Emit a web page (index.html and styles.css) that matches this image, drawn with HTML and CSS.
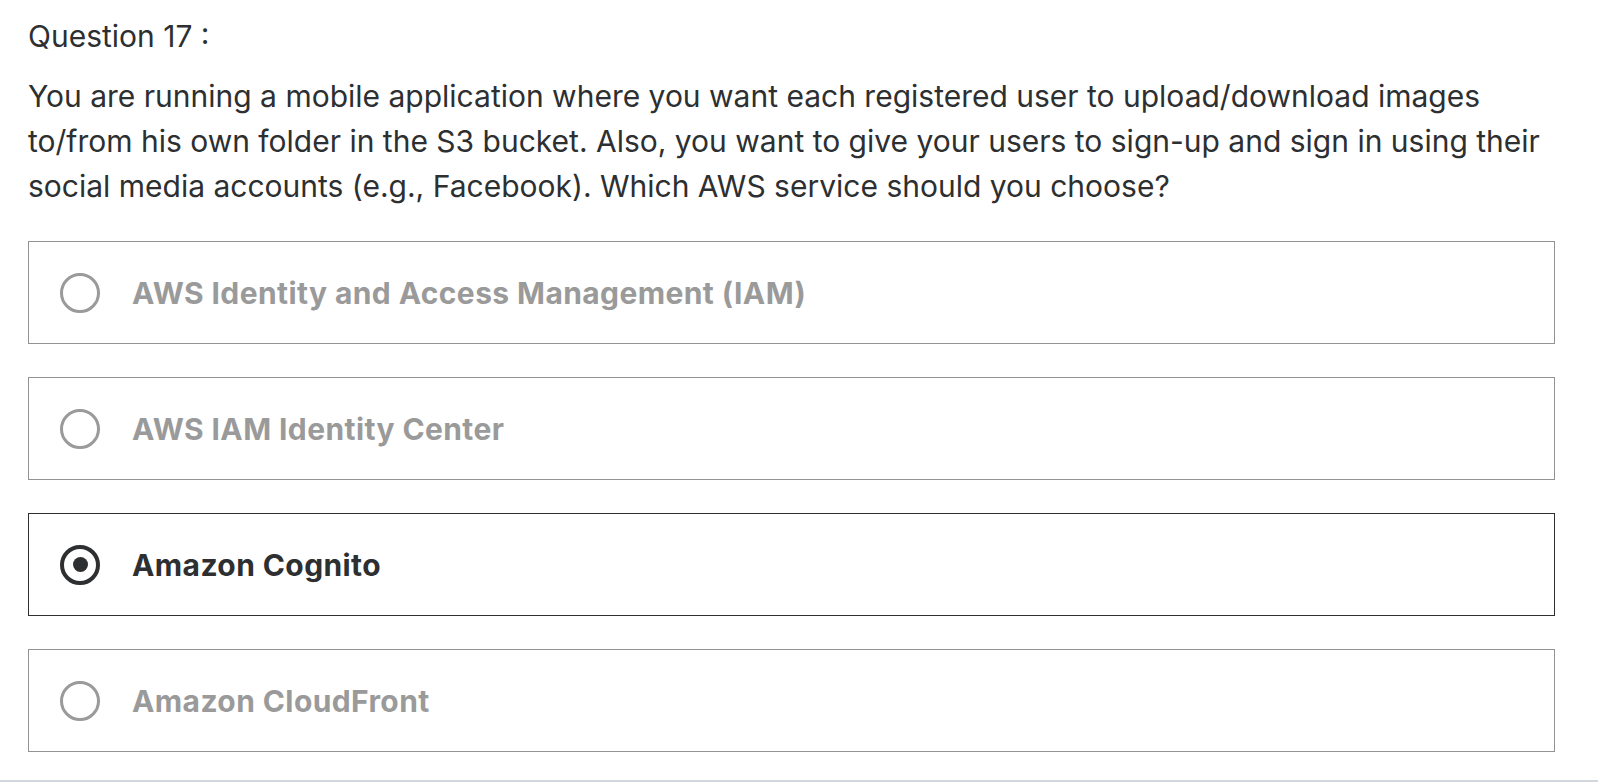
FILE: index.html
```html
<!DOCTYPE html>
<html lang="en">
<head>
<meta charset="utf-8">
<title>Question 17</title>
<link rel="stylesheet" href="styles.css">
</head>
<body>
<main class="quiz">
  <div class="q-title">Question 17 :</div>
  <p class="q-text">You are running a mobile application where you want each registered user to upload/download images to/from his own folder in the S3 bucket. Also, you want to give your users to sign-up and sign in using their social media accounts (e.g., Facebook). Which AWS service should you choose?</p>
  <ul class="options">
    <li class="option"><span class="radio"></span><span class="label">AWS Identity and Access Management (IAM)</span></li>
    <li class="option"><span class="radio"></span><span class="label">AWS IAM Identity Center</span></li>
    <li class="option selected"><span class="radio"></span><span class="label">Amazon Cognito</span></li>
    <li class="option"><span class="radio"></span><span class="label">Amazon CloudFront</span></li>
  </ul>
</main>
<div class="bottom-rule"></div>
</body>
</html>
```
FILE: styles.css
```css
html, body {
  margin: 0;
  padding: 0;
  background: #ffffff;
}
body {
  font-family: Inter, Roboto, "Liberation Sans", Arial, sans-serif;
  color: #2d2f31;
  width: 1598px;
  height: 784px;
  overflow: hidden;
  display: flex;
  flex-direction: column;
}
.quiz {
  flex: 1;
  padding: 14px 0 0 28px;
  width: 1527px;
}
.q-title {
  font-size: 30px;
  line-height: 45px;
}
.q-text {
  margin: 15px 0 0;
  font-size: 30px;
  line-height: 45px;
  max-width: 1515px;
}
.options {
  list-style: none;
  margin: 32px 0 0;
  padding: 0;
  display: flex;
  flex-direction: column;
  gap: 33px;
}
.option {
  box-sizing: border-box;
  height: 103px;
  border: 1px solid #939393;
  display: flex;
  align-items: center;
  padding-left: 31px;
  gap: 32px;
  color: #9a9a9a;
  font-weight: 700;
  font-size: 30px;
  letter-spacing: 0.4px;
}
.radio {
  box-sizing: border-box;
  width: 40px;
  height: 40px;
  border-radius: 50%;
  border: 3px solid #9a9a9a;
  flex: none;
  display: flex;
  align-items: center;
  justify-content: center;
}
.option.selected {
  border-color: #2d2f31;
  color: #2d2f31;
}
.option.selected .radio {
  border: 4px solid #2d2f31;
}
.option.selected .radio::after {
  content: "";
  width: 15px;
  height: 15px;
  border-radius: 50%;
  background: #2d2f31;
}
.bottom-rule {
  height: 2px;
  background: #d1d7dc;
  margin-bottom: 2px;
}
```
